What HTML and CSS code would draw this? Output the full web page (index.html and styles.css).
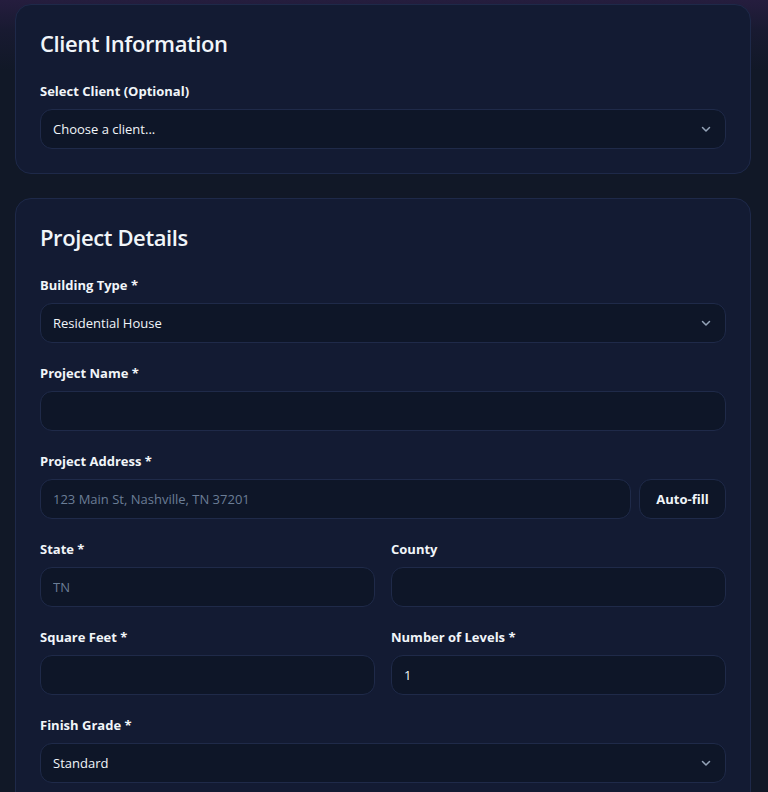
FILE: index.html
```html
<!DOCTYPE html>
<html lang="en">
    <head>
        <meta charset="UTF-8" />
        <meta name="viewport" content="width=device-width, initial-scale=1.0" />
        <title>New Estimate</title>
        <link rel="stylesheet" href="styles.css">
    </head>
    <body>
        <div class="page">
            <section class="card">
                <h2>Client Information</h2>
                <div class="field">
                    <label for="client">Select Client (Optional)</label>
                    <div class="select">
                        <span>Choose a client...</span>
                        <svg class="chevron" viewBox="0 0 12 12" width="12" height="12"><path d="M2.5 4.5 6 8l3.5-3.5" fill="none" stroke="currentColor" stroke-width="1.5" stroke-linecap="round" stroke-linejoin="round"/></svg>
                    </div>
                </div>
            </section>

            <section class="card">
                <h2>Project Details</h2>
                <div class="field">
                    <label>Building Type *</label>
                    <div class="select">
                        <span>Residential House</span>
                        <svg class="chevron" viewBox="0 0 12 12" width="12" height="12"><path d="M2.5 4.5 6 8l3.5-3.5" fill="none" stroke="currentColor" stroke-width="1.5" stroke-linecap="round" stroke-linejoin="round"/></svg>
                    </div>
                </div>
                <div class="field">
                    <label for="projectName">Project Name *</label>
                    <input type="text" id="projectName" />
                </div>
                <div class="field">
                    <label for="address">Project Address *</label>
                    <div class="address-row">
                        <input type="text" id="address" placeholder="123 Main St, Nashville, TN 37201" />
                        <button class="autofill">Auto-fill</button>
                    </div>
                </div>
                <div class="grid">
                    <div class="field">
                        <label for="state">State *</label>
                        <input type="text" id="state" placeholder="TN" />
                    </div>
                    <div class="field">
                        <label for="county">County</label>
                        <input type="text" id="county" />
                    </div>
                    <div class="field">
                        <label for="sqft">Square Feet *</label>
                        <input type="number" id="sqft" />
                    </div>
                    <div class="field">
                        <label for="levels">Number of Levels *</label>
                        <input type="number" id="levels" value="1" />
                    </div>
                </div>
                <div class="field">
                    <label>Finish Grade *</label>
                    <div class="select">
                        <span>Standard</span>
                        <svg class="chevron" viewBox="0 0 12 12" width="12" height="12"><path d="M2.5 4.5 6 8l3.5-3.5" fill="none" stroke="currentColor" stroke-width="1.5" stroke-linecap="round" stroke-linejoin="round"/></svg>
                    </div>
                </div>
            </section>
        </div>
    </body>
</html>
```

FILE: styles.css
```css
body {
    font-family: "Open Sans", "Noto Sans", sans-serif;
    background: linear-gradient(180deg, #251d3e 0, #181a31 30px, #111827 70px) no-repeat, #111827;
    color: #f1f5f9;
    margin: 0;
    min-height: 100vh;
}
.page {
    padding: 4px 17px 0 15px;
    display: flex;
    flex-direction: column;
    gap: 24px;
}
.card {
    background: #131b33;
    border: 1px solid #1e2949;
    border-radius: 16px;
    padding: 24px;
}
.card h2 {
    font-size: 22px;
    font-weight: 600;
    line-height: 28px;
    margin: 0 0 24px;
    letter-spacing: -0.4px;
}
.field {
    display: flex;
    flex-direction: column;
    margin-bottom: 20px;
}
.card > .field:last-child {
    margin-bottom: 0;
}
.field label {
    font-size: 13px;
    font-weight: 700;
    line-height: 20px;
    margin-bottom: 8px;
}
input, .select, .autofill {
    box-sizing: border-box;
    height: 40px;
    background: #0e1628;
    border: 1px solid #1f2a49;
    border-radius: 12px;
    color: #f1f5f9;
    font-family: inherit;
    font-size: 13px;
}
input {
    width: 100%;
    padding: 0 12px;
    outline: none;
}
input::placeholder {
    color: #6b7d96;
}
input[type="number"] {
    -moz-appearance: textfield;
}
input::-webkit-outer-spin-button,
input::-webkit-inner-spin-button {
    -webkit-appearance: none;
    margin: 0;
}
.select {
    display: flex;
    align-items: center;
    justify-content: space-between;
    padding: 0 13px 0 12px;
}
.chevron {
    color: #94a3b8;
}
.address-row {
    display: flex;
    gap: 8px;
}
.address-row input {
    flex: 1;
}
.autofill {
    width: 87px;
    flex-shrink: 0;
    font-weight: 700;
    cursor: pointer;
}
.grid {
    display: grid;
    grid-template-columns: 1fr 1fr;
    column-gap: 16px;
}
```
